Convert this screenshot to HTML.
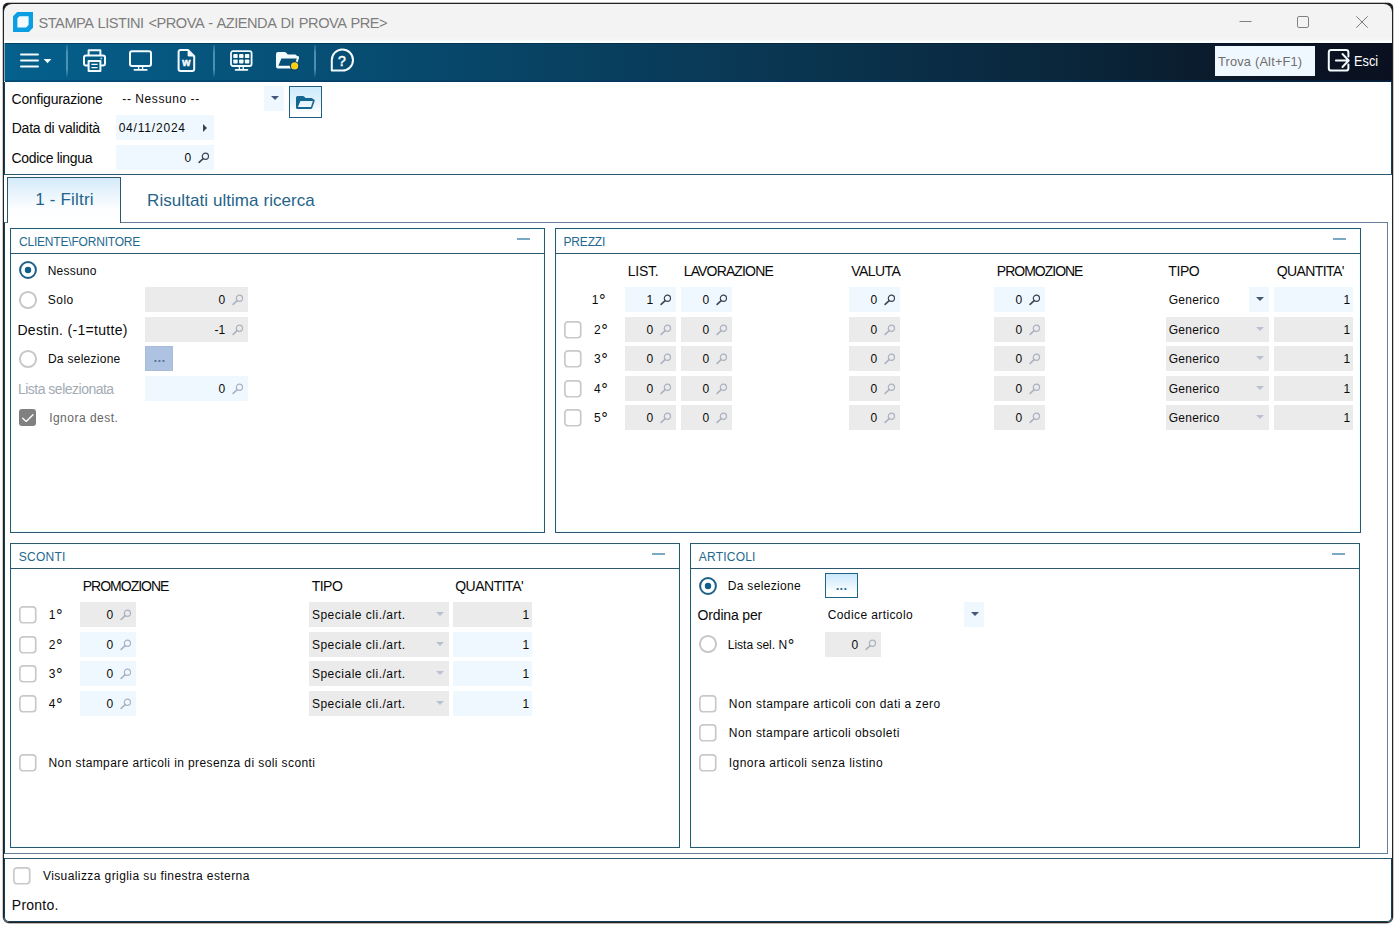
<!DOCTYPE html>
<html lang="it"><head><meta charset="utf-8"><title>STAMPA LISTINI</title>
<style>
html,body{margin:0;padding:0}
body{width:1396px;height:925px;background:#fff;position:relative;overflow:hidden;font-family:"Liberation Sans", sans-serif;}
div,svg,.t{position:absolute}
.deg{font-size:16.5px;line-height:0;position:relative;top:2.4px;margin-left:.7px}
svg{overflow:visible}
svg text{position:static}
.t{white-space:pre;line-height:20px;height:20px}
#win{left:3px;top:3px;width:1390px;height:920px;box-sizing:border-box;border:1px solid #232323;border-radius:5px 5px 6px 6px;background:#fff;box-shadow:0 0 0 .4px rgba(20,20,20,.55)}
</style></head>
<body>
<div id="win"></div>
<div style="left:3px;top:3px;width:9px;height:9px;background:#1e1e1e;border-radius:5px 0 0 0"></div>
<div style="left:1384px;top:3px;width:9px;height:9px;background:#1e1e1e;border-radius:0 5px 0 0"></div>
<div style="left:4px;top:4px;width:1388px;height:39px;background:linear-gradient(#f3f3f3 0,#f3f3f3 35px,#fbffff 37.5px,#fbffff 100%);border-radius:8px 8px 0 0"></div>
<svg style="left:13px;top:12px" width="20" height="20" viewBox="0 0 20 20"><path d="M4.2 0 H20 V15.8 L15.8 20 H0 V4.2 Z" fill="#0c9ee2"/><path d="M6.6 4.2 H15.6 V12.6 Q15.6 13 15.3 13.3 L13.3 15.3 Q13 15.6 12.6 15.6 H4.4 V6.6 Q4.4 6.2 4.7 5.9 L5.9 4.7 Q6.2 4.2 6.6 4.2 Z" fill="#f4fbff"/></svg>
<span class="t" style="top:12.94px;font-size:14.6px;color:#7d7d7d;letter-spacing:-0.471px;word-spacing:1.2px;left:38.50px;">STAMPA LISTINI &lt;PROVA - AZIENDA DI PROVA PRE&gt;</span>
<svg style="left:1230px;top:10px" width="150" height="24" viewBox="0 0 150 24"><path d="M9.5 11.5 H21.5" stroke="#808080" stroke-width="1" fill="none"/><rect x="67.5" y="6.5" width="11" height="11" rx="1.6" fill="none" stroke="#808080" stroke-width="1"/><path d="M126.3 6.3 L137.7 17.7 M137.7 6.3 L126.3 17.7" stroke="#7c7c7c" stroke-width="1" fill="none"/></svg>
<div style="left:5px;top:43px;width:1387px;height:39px;background:linear-gradient(90deg,#04608c 0%,#07496d 30%,#0a3550 57%,#0a2438 79%,#0a1424 93%,#0a1020 100%)"></div>
<div style="left:5px;top:43px;width:1387px;height:1px;background:rgba(0,0,20,.28)"></div>
<div style="left:5px;top:80px;width:1387px;height:2px;background:linear-gradient(rgba(0,48,90,.25),rgba(0,52,96,.6))"></div>
<div style="left:4px;top:43px;width:1px;height:38px;background:#7aaac4"></div>
<div style="left:66.0px;top:45px;width:1.6px;height:32px;background:linear-gradient(rgba(120,180,215,.2),rgba(120,180,215,.62) 25%,rgba(120,180,215,.62) 75%,rgba(120,180,215,.08))"></div>
<div style="left:213.39999999999998px;top:45px;width:1.6px;height:32px;background:linear-gradient(rgba(120,180,215,.2),rgba(120,180,215,.62) 25%,rgba(120,180,215,.62) 75%,rgba(120,180,215,.08))"></div>
<div style="left:314.2px;top:45px;width:1.6px;height:32px;background:linear-gradient(rgba(120,180,215,.2),rgba(120,180,215,.62) 25%,rgba(120,180,215,.62) 75%,rgba(120,180,215,.08))"></div>
<svg style="left:18px;top:50px" width="36" height="22" viewBox="0 0 36 22"><path d="M3 4.6 H20 M3 10.5 H20 M3 16.5 H20" stroke="#f3fbff" stroke-width="2" stroke-linecap="round" fill="none"/><path d="M25.6 9 H33.4 L29.5 13.2 Z" fill="#f3fbff"/></svg>
<svg style="left:82px;top:48px" width="26" height="26" viewBox="0 0 26 26"><g fill="none" stroke="#f3fbff" stroke-width="2" stroke-linejoin="round"><path d="M6.6 7 V2.2 H18.4 V7"/><path d="M6.4 17.6 H4 Q2 17.6 2 15.6 V9.4 Q2 7.4 4 7.4 H21 Q23 7.4 23 9.4 V15.6 Q23 17.6 21 17.6 H18.6"/><path d="M6.6 13 H18.4 V23 H6.6 Z"/></g><path d="M9.4 16.4 H15.6 M9.4 19.6 H15.6" stroke="#f3fbff" stroke-width="1.4" fill="none"/><circle cx="19.2" cy="10.6" r="1" fill="#8fd0f4"/></svg>
<svg style="left:128px;top:48px" width="26" height="26" viewBox="0 0 26 26"><rect x="2" y="3.2" width="21" height="14.8" rx="2" fill="none" stroke="#f3fbff" stroke-width="2"/><path d="M10.6 18.5 V21.4 M14.6 18.5 V21.4" stroke="#f3fbff" stroke-width="1.4"/><path d="M6.4 21.8 H18.8" stroke="#f3fbff" stroke-width="1.8" stroke-linecap="round"/></svg>
<svg style="left:176px;top:48px" width="22" height="26" viewBox="0 0 22 26"><path d="M4.6 2 H12 L18.2 8.2 V21 Q18.2 23 16.2 23 H4.6 Q2.6 23 2.6 21 V4 Q2.6 2 4.6 2 Z" fill="none" stroke="#f3fbff" stroke-width="2" stroke-linejoin="round"/><path d="M11.6 1.4 L18.8 8.6 H13 Q11.6 8.6 11.6 7.2 Z" fill="#f3fbff"/><text x="10.4" y="18.2" font-family="Liberation Sans, sans-serif" font-size="10.5" font-weight="700" fill="#f3fbff" stroke="#f3fbff" stroke-width="0.5" text-anchor="middle">w</text></svg>
<svg style="left:228px;top:48px" width="28" height="26" viewBox="0 0 28 26"><rect x="3" y="3.2" width="20.6" height="14.8" rx="2" fill="none" stroke="#f3fbff" stroke-width="1.8"/><rect x="5.3" y="6.1" width="4.4" height="4" rx="0.9" fill="#f3fbff"/><rect x="5.3" y="11.4" width="4.4" height="4" rx="0.9" fill="#f3fbff"/><rect x="11.1" y="6.1" width="4.4" height="4" rx="0.9" fill="#f3fbff"/><rect x="11.1" y="11.4" width="4.4" height="4" rx="0.9" fill="#f3fbff"/><rect x="16.9" y="6.1" width="4.4" height="4" rx="0.9" fill="#f3fbff"/><rect x="16.9" y="11.4" width="4.4" height="4" rx="0.9" fill="#f3fbff"/><path d="M11.4 18.5 V21.4 M15.2 18.5 V21.4" stroke="#f3fbff" stroke-width="1.4"/><path d="M7.6 21.8 H19.4" stroke="#f3fbff" stroke-width="1.8" stroke-linecap="round"/></svg>
<svg style="left:276px;top:52px" width="24" height="18" viewBox="0 0 24 18"><path d="M0,2 Q0,0 2,0 H8.5 Q9.5,0 10.2,0.8 L11.8,2.4 H19 Q20.6,2.4 20.9,4 H21.6 Q23.6,4 23,5.9 L20,15 Q19.6,16.4 18.2,16.4 H2 Q0,16.4 0,14.4 Z M5.4,6.4 H20.8 L18.4,13.8 H2.4 Z" fill="#f3fbff" fill-rule="evenodd"/><circle cx="18.6" cy="13.95" r="4.7" fill="#063c5c"/><circle cx="18.6" cy="13.95" r="3.6" fill="#f3d33a"/><circle cx="18.6" cy="13.95" r="2.5" fill="#ffcb05"/></svg>
<svg style="left:329px;top:47px" width="28" height="27" viewBox="0 0 28 27"><path d="M2.8 23.6 V13.2 A10.6 10.6 0 1 1 13.4 23.6 Z" fill="none" stroke="#f3fbff" stroke-width="2" stroke-linejoin="round"/><text x="12.9" y="18.8" font-family="Liberation Sans, sans-serif" font-size="14" font-weight="400" fill="#f3fbff" stroke="#f3fbff" stroke-width="0.55" text-anchor="middle">?</text></svg>
<div style="left:1215px;top:46px;width:100px;height:30px;background:#f0f8ff"></div>
<span class="t" style="top:51.66px;font-size:12.8px;color:#6e6e6e;letter-spacing:0.189px;left:1218.00px;">Trova (Alt+F1)</span>
<svg style="left:1326px;top:47px" width="26" height="27" viewBox="0 0 26 27"><path d="M22.4 9.6 V5.4 Q22.4 3 20 3 H5.2 Q2.8 3 2.8 5.4 V21.2 Q2.8 23.6 5.2 23.6 H20 Q22.4 23.6 22.4 21.2 V17.4" fill="none" stroke="#f3fbff" stroke-width="2" stroke-linecap="round"/><path d="M9.9 13.5 H22 M16.5 7 L22.7 13.5 L16.5 20" fill="none" stroke="#f3fbff" stroke-width="2" stroke-linecap="round" stroke-linejoin="round"/></svg>
<span class="t" style="top:50.70px;font-size:15px;color:#fff;left:1354.47px;transform:scaleX(.85);transform-origin:0 50%;">Esci</span>
<div style="left:4px;top:82px;width:1px;height:93px;background:#163e54"></div>
<div style="left:1391px;top:82px;width:1px;height:93px;background:#163e54"></div>
<div style="left:4px;top:174px;width:1388px;height:1px;background:#2c586f"></div>
<span class="t" style="top:88.85px;font-size:14px;color:#0a0a0a;letter-spacing:-0.226px;left:11.53px;">Configurazione</span>
<span class="t" style="top:117.85px;font-size:14px;color:#0a0a0a;letter-spacing:-0.226px;left:11.73px;">Data di validità</span>
<span class="t" style="top:147.85px;font-size:14px;color:#0a0a0a;letter-spacing:-0.325px;left:11.53px;">Codice lingua</span>
<div style="left:264px;top:86px;width:20px;height:25px;background:#f0f8ff"></div>
<svg style="left:271px;top:96.2px" width="8" height="4" viewBox="0 0 8 4"><path d="M0 0 H8 L4 4 Z" fill="#46587a"/></svg>
<span class="t" style="top:88.84px;font-size:12px;color:#0a0a0a;letter-spacing:0.567px;left:122.34px;">-- Nessuno --</span>
<div style="left:289px;top:86px;width:33px;height:32px;box-sizing:border-box;border:1.2px solid #1f5f80;background:linear-gradient(#cceafb 0,#e4f3fd 50%,#fff 88%)"></div>
<svg style="left:296.1px;top:96px" width="19" height="13" viewBox="0 0 23.4 16.4" preserveAspectRatio="none"><path d="M0,2 Q0,0 2,0 H8.5 Q9.5,0 10.2,0.8 L11.8,2.4 H19 Q20.6,2.4 20.9,4 H21.6 Q23.6,4 23,5.9 L20,15 Q19.6,16.4 18.2,16.4 H2 Q0,16.4 0,14.4 Z M5.4,6.4 H20.8 L18.4,13.8 H2.4 Z" fill="#136790" fill-rule="evenodd"/></svg>
<div style="left:116px;top:115px;width:98px;height:25px;background:#f0f8ff"></div>
<span class="t" style="top:117.84px;font-size:12px;color:#0a0a0a;letter-spacing:0.805px;left:118.64px;">04/11/2024</span>
<svg style="left:203px;top:123.5px" width="4" height="8" viewBox="0 0 4 8"><path d="M0 0 L4 4 L0 8 Z" fill="#3b4256"/></svg>
<div style="left:116px;top:145px;width:98px;height:25px;background:#f0f8ff"></div>
<svg style="left:198.3px;top:152.25px" width="12" height="12" viewBox="0 0 12 12"><circle cx="7.4" cy="4.3" r="3.1" fill="none" stroke="#3b4256" stroke-width="1.2"/><path d="M5.2 6.6 L1.1 10.4" stroke="#3b4256" stroke-width="1.55" stroke-linecap="round"/></svg>
<span class="t" style="top:147.84px;font-size:12px;color:#0a0a0a;right:1204.94px;">0</span>
<div style="left:4px;top:222px;width:1384px;height:632px;box-sizing:border-box;border:1px solid #687f9b;border-left-color:#163e54"></div>
<div style="left:7px;top:177px;width:114px;height:46px;box-sizing:border-box;border:1px solid #2c586f;border-bottom:none;background:linear-gradient(#d4eafa 0,#e9f4fc 35%,#fcfeff 68%,#fff 100%)"></div>
<span class="t" style="top:189.91px;font-size:17px;color:#24648a;letter-spacing:0.200px;left:35.16px;">1 - Filtri</span>
<span class="t" style="top:190.81px;font-size:17px;color:#24648a;letter-spacing:0.065px;left:147.06px;">Risultati ultima ricerca</span>
<div style="left:10px;top:228px;width:535px;height:305px;box-sizing:border-box;border:1px solid #2c586f;background:#fff;box-shadow:inset 0 0 0 1px #edffff"></div>
<div style="left:10px;top:253px;width:535px;height:1px;background:#2c586f"></div>
<span class="t" style="top:231.84px;font-size:12px;color:#23698f;letter-spacing:-0.191px;left:18.94px;">CLIENTE\FORNITORE</span>
<div style="left:517px;top:238px;width:13px;height:2px;background:#7ba8c2"></div>
<svg style="left:18px;top:260.3px" width="20" height="20" viewBox="0 0 20 20"><circle cx="10" cy="10" r="7.9" fill="#fff" stroke="#1b6088" stroke-width="2"/><circle cx="10" cy="10" r="3.2" fill="#0f5f8c"/></svg>
<span class="t" style="top:260.64px;font-size:12px;color:#0a0a0a;letter-spacing:0.208px;left:47.74px;">Nessuno</span>
<svg style="left:18px;top:289.5px" width="20" height="20" viewBox="0 0 20 20"><circle cx="10" cy="10" r="8.1" fill="#fff" stroke="#c8c8c8" stroke-width="2"/></svg>
<span class="t" style="top:289.84px;font-size:12px;color:#0a0a0a;letter-spacing:0.496px;left:47.74px;">Solo</span>
<div style="left:145px;top:287px;width:103px;height:25px;background:#ebebeb"></div>
<svg style="left:232.3px;top:294.25px" width="12" height="12" viewBox="0 0 12 12"><circle cx="7.4" cy="4.3" r="3.1" fill="none" stroke="#aab1c0" stroke-width="1.2"/><path d="M5.2 6.6 L1.1 10.4" stroke="#aab1c0" stroke-width="1.55" stroke-linecap="round"/></svg>
<span class="t" style="top:289.84px;font-size:12px;color:#0a0a0a;right:1170.94px;">0</span>
<span class="t" style="top:319.55px;font-size:14px;color:#0a0a0a;letter-spacing:0.317px;left:17.43px;">Destin. (-1=tutte)</span>
<div style="left:145px;top:317px;width:103px;height:25px;background:#ebebeb"></div>
<svg style="left:232.3px;top:324.25px" width="12" height="12" viewBox="0 0 12 12"><circle cx="7.4" cy="4.3" r="3.1" fill="none" stroke="#aab1c0" stroke-width="1.2"/><path d="M5.2 6.6 L1.1 10.4" stroke="#aab1c0" stroke-width="1.55" stroke-linecap="round"/></svg>
<span class="t" style="top:319.84px;font-size:12px;color:#0a0a0a;right:1170.94px;">-1</span>
<svg style="left:18px;top:348.5px" width="20" height="20" viewBox="0 0 20 20"><circle cx="10" cy="10" r="8.1" fill="#fff" stroke="#c8c8c8" stroke-width="2"/></svg>
<span class="t" style="top:348.84px;font-size:12px;color:#0a0a0a;letter-spacing:0.268px;left:47.94px;">Da selezione</span>
<div style="left:145px;top:346px;width:28px;height:25px;box-sizing:border-box;border:1px solid #a9bddb;background:#adc3e1"></div>
<span class="t" style="top:346.42px;font-size:19px;color:#5b7196;left:152.86px;letter-spacing:-1.28px;">...</span>
<span class="t" style="top:378.85px;font-size:14px;color:#a3abb5;letter-spacing:-0.504px;left:17.93px;">Lista selezionata</span>
<div style="left:145px;top:376px;width:103px;height:25px;background:#f0f8ff"></div>
<svg style="left:232.3px;top:383.25px" width="12" height="12" viewBox="0 0 12 12"><circle cx="7.4" cy="4.3" r="3.1" fill="none" stroke="#aab1c0" stroke-width="1.2"/><path d="M5.2 6.6 L1.1 10.4" stroke="#aab1c0" stroke-width="1.55" stroke-linecap="round"/></svg>
<span class="t" style="top:378.84px;font-size:12px;color:#0a0a0a;right:1170.94px;">0</span>
<div style="left:18.8px;top:408.6px;width:17.5px;height:17.5px;border-radius:3px;background:#808080"><svg width="17.5" height="17.5" viewBox="0 0 17.5 17.5" style="left:0;top:0"><path d="M3.7 9.3 L7.2 12.4 L14 5.8" fill="none" stroke="#fff" stroke-width="1.35" stroke-linecap="round" stroke-linejoin="round"/></svg></div>
<span class="t" style="top:407.84px;font-size:12px;color:#666;letter-spacing:0.486px;left:49.14px;">Ignora dest.</span>
<div style="left:555px;top:228px;width:806px;height:305px;box-sizing:border-box;border:1px solid #2c586f;background:#fff;box-shadow:inset 0 0 0 1px #edffff"></div>
<div style="left:555px;top:253px;width:806px;height:1px;background:#2c586f"></div>
<span class="t" style="top:231.84px;font-size:12px;color:#23698f;letter-spacing:-0.170px;left:563.54px;">PREZZI</span>
<div style="left:1333px;top:238px;width:13px;height:2px;background:#7ba8c2"></div>
<span class="t" style="top:261.15px;font-size:14px;color:#0a0a0a;letter-spacing:-0.242px;left:627.83px;">LIST.</span>
<span class="t" style="top:261.15px;font-size:14px;color:#0a0a0a;letter-spacing:-0.851px;left:683.73px;">LAVORAZIONE</span>
<span class="t" style="top:261.15px;font-size:14px;color:#0a0a0a;letter-spacing:-0.570px;left:851.23px;">VALUTA</span>
<span class="t" style="top:261.15px;font-size:14px;color:#0a0a0a;letter-spacing:-1.004px;left:996.83px;">PROMOZIONE</span>
<span class="t" style="top:261.15px;font-size:14px;color:#0a0a0a;letter-spacing:-0.377px;left:1168.23px;">TIPO</span>
<span class="t" style="top:261.15px;font-size:14px;color:#0a0a0a;letter-spacing:-0.585px;left:1276.63px;">QUANTITA&#x27;</span>
<span class="t" style="top:290.04px;font-size:12px;color:#0a0a0a;left:591.74px;">1<span class="deg">°</span></span>
<div style="left:625px;top:287px;width:51px;height:25px;background:#f0f8ff"></div>
<svg style="left:660.3px;top:294.25px" width="12" height="12" viewBox="0 0 12 12"><circle cx="7.4" cy="4.3" r="3.1" fill="none" stroke="#3b4256" stroke-width="1.2"/><path d="M5.2 6.6 L1.1 10.4" stroke="#3b4256" stroke-width="1.55" stroke-linecap="round"/></svg>
<span class="t" style="top:289.84px;font-size:12px;color:#0a0a0a;right:742.94px;">1</span>
<div style="left:681px;top:287px;width:51px;height:25px;background:#f0f8ff"></div>
<svg style="left:716.3px;top:294.25px" width="12" height="12" viewBox="0 0 12 12"><circle cx="7.4" cy="4.3" r="3.1" fill="none" stroke="#3b4256" stroke-width="1.2"/><path d="M5.2 6.6 L1.1 10.4" stroke="#3b4256" stroke-width="1.55" stroke-linecap="round"/></svg>
<span class="t" style="top:289.84px;font-size:12px;color:#0a0a0a;right:686.94px;">0</span>
<div style="left:849px;top:287px;width:51px;height:25px;background:#f0f8ff"></div>
<svg style="left:884.3px;top:294.25px" width="12" height="12" viewBox="0 0 12 12"><circle cx="7.4" cy="4.3" r="3.1" fill="none" stroke="#3b4256" stroke-width="1.2"/><path d="M5.2 6.6 L1.1 10.4" stroke="#3b4256" stroke-width="1.55" stroke-linecap="round"/></svg>
<span class="t" style="top:289.84px;font-size:12px;color:#0a0a0a;right:518.94px;">0</span>
<div style="left:994px;top:287px;width:51px;height:25px;background:#f0f8ff"></div>
<svg style="left:1029.3px;top:294.25px" width="12" height="12" viewBox="0 0 12 12"><circle cx="7.4" cy="4.3" r="3.1" fill="none" stroke="#3b4256" stroke-width="1.2"/><path d="M5.2 6.6 L1.1 10.4" stroke="#3b4256" stroke-width="1.55" stroke-linecap="round"/></svg>
<span class="t" style="top:289.84px;font-size:12px;color:#0a0a0a;right:373.94px;">0</span>
<div style="left:1249px;top:287px;width:20px;height:25px;background:#f0f8ff"></div>
<svg style="left:1255.7px;top:297.3px" width="8" height="4" viewBox="0 0 8 4"><path d="M0 0 H8 L4 4 Z" fill="#46587a"/></svg>
<span class="t" style="top:289.84px;font-size:12px;color:#0a0a0a;letter-spacing:0.288px;left:1168.64px;">Generico</span>
<div style="left:1274px;top:287px;width:79px;height:25px;background:#f0f8ff"></div>
<span class="t" style="top:289.84px;font-size:12px;color:#0a0a0a;right:45.94px;">1</span>
<svg style="left:564px;top:320.6px" width="17.6" height="17.6" viewBox="0 0 17.6 17.6"><rect x="0.85" y="0.85" width="15.9" height="15.9" rx="3.2" fill="#fff" stroke="#c9c9c9" stroke-width="1.7"/></svg>
<span class="t" style="top:320.04px;font-size:12px;color:#0a0a0a;left:593.94px;">2<span class="deg">°</span></span>
<div style="left:625px;top:317px;width:51px;height:25px;background:#ebebeb"></div>
<svg style="left:660.3px;top:324.25px" width="12" height="12" viewBox="0 0 12 12"><circle cx="7.4" cy="4.3" r="3.1" fill="none" stroke="#aab1c0" stroke-width="1.2"/><path d="M5.2 6.6 L1.1 10.4" stroke="#aab1c0" stroke-width="1.55" stroke-linecap="round"/></svg>
<span class="t" style="top:319.84px;font-size:12px;color:#0a0a0a;right:742.94px;">0</span>
<div style="left:681px;top:317px;width:51px;height:25px;background:#ebebeb"></div>
<svg style="left:716.3px;top:324.25px" width="12" height="12" viewBox="0 0 12 12"><circle cx="7.4" cy="4.3" r="3.1" fill="none" stroke="#aab1c0" stroke-width="1.2"/><path d="M5.2 6.6 L1.1 10.4" stroke="#aab1c0" stroke-width="1.55" stroke-linecap="round"/></svg>
<span class="t" style="top:319.84px;font-size:12px;color:#0a0a0a;right:686.94px;">0</span>
<div style="left:849px;top:317px;width:51px;height:25px;background:#ebebeb"></div>
<svg style="left:884.3px;top:324.25px" width="12" height="12" viewBox="0 0 12 12"><circle cx="7.4" cy="4.3" r="3.1" fill="none" stroke="#aab1c0" stroke-width="1.2"/><path d="M5.2 6.6 L1.1 10.4" stroke="#aab1c0" stroke-width="1.55" stroke-linecap="round"/></svg>
<span class="t" style="top:319.84px;font-size:12px;color:#0a0a0a;right:518.94px;">0</span>
<div style="left:994px;top:317px;width:51px;height:25px;background:#ebebeb"></div>
<svg style="left:1029.3px;top:324.25px" width="12" height="12" viewBox="0 0 12 12"><circle cx="7.4" cy="4.3" r="3.1" fill="none" stroke="#aab1c0" stroke-width="1.2"/><path d="M5.2 6.6 L1.1 10.4" stroke="#aab1c0" stroke-width="1.55" stroke-linecap="round"/></svg>
<span class="t" style="top:319.84px;font-size:12px;color:#0a0a0a;right:373.94px;">0</span>
<div style="left:1166px;top:317px;width:103px;height:25px;background:#ebebeb"></div>
<svg style="left:1255.7px;top:327.3px" width="8" height="4" viewBox="0 0 8 4"><path d="M0 0 H8 L4 4 Z" fill="#b9c1d0"/></svg>
<span class="t" style="top:319.84px;font-size:12px;color:#0a0a0a;letter-spacing:0.288px;left:1168.64px;">Generico</span>
<div style="left:1274px;top:317px;width:79px;height:25px;background:#ebebeb"></div>
<span class="t" style="top:319.84px;font-size:12px;color:#0a0a0a;right:45.94px;">1</span>
<svg style="left:564px;top:349.6px" width="17.6" height="17.6" viewBox="0 0 17.6 17.6"><rect x="0.85" y="0.85" width="15.9" height="15.9" rx="3.2" fill="#fff" stroke="#c9c9c9" stroke-width="1.7"/></svg>
<span class="t" style="top:349.04px;font-size:12px;color:#0a0a0a;left:593.94px;">3<span class="deg">°</span></span>
<div style="left:625px;top:346px;width:51px;height:25px;background:#ebebeb"></div>
<svg style="left:660.3px;top:353.25px" width="12" height="12" viewBox="0 0 12 12"><circle cx="7.4" cy="4.3" r="3.1" fill="none" stroke="#aab1c0" stroke-width="1.2"/><path d="M5.2 6.6 L1.1 10.4" stroke="#aab1c0" stroke-width="1.55" stroke-linecap="round"/></svg>
<span class="t" style="top:348.84px;font-size:12px;color:#0a0a0a;right:742.94px;">0</span>
<div style="left:681px;top:346px;width:51px;height:25px;background:#ebebeb"></div>
<svg style="left:716.3px;top:353.25px" width="12" height="12" viewBox="0 0 12 12"><circle cx="7.4" cy="4.3" r="3.1" fill="none" stroke="#aab1c0" stroke-width="1.2"/><path d="M5.2 6.6 L1.1 10.4" stroke="#aab1c0" stroke-width="1.55" stroke-linecap="round"/></svg>
<span class="t" style="top:348.84px;font-size:12px;color:#0a0a0a;right:686.94px;">0</span>
<div style="left:849px;top:346px;width:51px;height:25px;background:#ebebeb"></div>
<svg style="left:884.3px;top:353.25px" width="12" height="12" viewBox="0 0 12 12"><circle cx="7.4" cy="4.3" r="3.1" fill="none" stroke="#aab1c0" stroke-width="1.2"/><path d="M5.2 6.6 L1.1 10.4" stroke="#aab1c0" stroke-width="1.55" stroke-linecap="round"/></svg>
<span class="t" style="top:348.84px;font-size:12px;color:#0a0a0a;right:518.94px;">0</span>
<div style="left:994px;top:346px;width:51px;height:25px;background:#ebebeb"></div>
<svg style="left:1029.3px;top:353.25px" width="12" height="12" viewBox="0 0 12 12"><circle cx="7.4" cy="4.3" r="3.1" fill="none" stroke="#aab1c0" stroke-width="1.2"/><path d="M5.2 6.6 L1.1 10.4" stroke="#aab1c0" stroke-width="1.55" stroke-linecap="round"/></svg>
<span class="t" style="top:348.84px;font-size:12px;color:#0a0a0a;right:373.94px;">0</span>
<div style="left:1166px;top:346px;width:103px;height:25px;background:#ebebeb"></div>
<svg style="left:1255.7px;top:356.3px" width="8" height="4" viewBox="0 0 8 4"><path d="M0 0 H8 L4 4 Z" fill="#b9c1d0"/></svg>
<span class="t" style="top:348.84px;font-size:12px;color:#0a0a0a;letter-spacing:0.288px;left:1168.64px;">Generico</span>
<div style="left:1274px;top:346px;width:79px;height:25px;background:#ebebeb"></div>
<span class="t" style="top:348.84px;font-size:12px;color:#0a0a0a;right:45.94px;">1</span>
<svg style="left:564px;top:379.6px" width="17.6" height="17.6" viewBox="0 0 17.6 17.6"><rect x="0.85" y="0.85" width="15.9" height="15.9" rx="3.2" fill="#fff" stroke="#c9c9c9" stroke-width="1.7"/></svg>
<span class="t" style="top:379.04px;font-size:12px;color:#0a0a0a;left:593.94px;">4<span class="deg">°</span></span>
<div style="left:625px;top:376px;width:51px;height:25px;background:#ebebeb"></div>
<svg style="left:660.3px;top:383.25px" width="12" height="12" viewBox="0 0 12 12"><circle cx="7.4" cy="4.3" r="3.1" fill="none" stroke="#aab1c0" stroke-width="1.2"/><path d="M5.2 6.6 L1.1 10.4" stroke="#aab1c0" stroke-width="1.55" stroke-linecap="round"/></svg>
<span class="t" style="top:378.84px;font-size:12px;color:#0a0a0a;right:742.94px;">0</span>
<div style="left:681px;top:376px;width:51px;height:25px;background:#ebebeb"></div>
<svg style="left:716.3px;top:383.25px" width="12" height="12" viewBox="0 0 12 12"><circle cx="7.4" cy="4.3" r="3.1" fill="none" stroke="#aab1c0" stroke-width="1.2"/><path d="M5.2 6.6 L1.1 10.4" stroke="#aab1c0" stroke-width="1.55" stroke-linecap="round"/></svg>
<span class="t" style="top:378.84px;font-size:12px;color:#0a0a0a;right:686.94px;">0</span>
<div style="left:849px;top:376px;width:51px;height:25px;background:#ebebeb"></div>
<svg style="left:884.3px;top:383.25px" width="12" height="12" viewBox="0 0 12 12"><circle cx="7.4" cy="4.3" r="3.1" fill="none" stroke="#aab1c0" stroke-width="1.2"/><path d="M5.2 6.6 L1.1 10.4" stroke="#aab1c0" stroke-width="1.55" stroke-linecap="round"/></svg>
<span class="t" style="top:378.84px;font-size:12px;color:#0a0a0a;right:518.94px;">0</span>
<div style="left:994px;top:376px;width:51px;height:25px;background:#ebebeb"></div>
<svg style="left:1029.3px;top:383.25px" width="12" height="12" viewBox="0 0 12 12"><circle cx="7.4" cy="4.3" r="3.1" fill="none" stroke="#aab1c0" stroke-width="1.2"/><path d="M5.2 6.6 L1.1 10.4" stroke="#aab1c0" stroke-width="1.55" stroke-linecap="round"/></svg>
<span class="t" style="top:378.84px;font-size:12px;color:#0a0a0a;right:373.94px;">0</span>
<div style="left:1166px;top:376px;width:103px;height:25px;background:#ebebeb"></div>
<svg style="left:1255.7px;top:386.3px" width="8" height="4" viewBox="0 0 8 4"><path d="M0 0 H8 L4 4 Z" fill="#b9c1d0"/></svg>
<span class="t" style="top:378.84px;font-size:12px;color:#0a0a0a;letter-spacing:0.288px;left:1168.64px;">Generico</span>
<div style="left:1274px;top:376px;width:79px;height:25px;background:#ebebeb"></div>
<span class="t" style="top:378.84px;font-size:12px;color:#0a0a0a;right:45.94px;">1</span>
<svg style="left:564px;top:408.6px" width="17.6" height="17.6" viewBox="0 0 17.6 17.6"><rect x="0.85" y="0.85" width="15.9" height="15.9" rx="3.2" fill="#fff" stroke="#c9c9c9" stroke-width="1.7"/></svg>
<span class="t" style="top:408.04px;font-size:12px;color:#0a0a0a;left:593.94px;">5<span class="deg">°</span></span>
<div style="left:625px;top:405px;width:51px;height:25px;background:#ebebeb"></div>
<svg style="left:660.3px;top:412.25px" width="12" height="12" viewBox="0 0 12 12"><circle cx="7.4" cy="4.3" r="3.1" fill="none" stroke="#aab1c0" stroke-width="1.2"/><path d="M5.2 6.6 L1.1 10.4" stroke="#aab1c0" stroke-width="1.55" stroke-linecap="round"/></svg>
<span class="t" style="top:407.84px;font-size:12px;color:#0a0a0a;right:742.94px;">0</span>
<div style="left:681px;top:405px;width:51px;height:25px;background:#ebebeb"></div>
<svg style="left:716.3px;top:412.25px" width="12" height="12" viewBox="0 0 12 12"><circle cx="7.4" cy="4.3" r="3.1" fill="none" stroke="#aab1c0" stroke-width="1.2"/><path d="M5.2 6.6 L1.1 10.4" stroke="#aab1c0" stroke-width="1.55" stroke-linecap="round"/></svg>
<span class="t" style="top:407.84px;font-size:12px;color:#0a0a0a;right:686.94px;">0</span>
<div style="left:849px;top:405px;width:51px;height:25px;background:#ebebeb"></div>
<svg style="left:884.3px;top:412.25px" width="12" height="12" viewBox="0 0 12 12"><circle cx="7.4" cy="4.3" r="3.1" fill="none" stroke="#aab1c0" stroke-width="1.2"/><path d="M5.2 6.6 L1.1 10.4" stroke="#aab1c0" stroke-width="1.55" stroke-linecap="round"/></svg>
<span class="t" style="top:407.84px;font-size:12px;color:#0a0a0a;right:518.94px;">0</span>
<div style="left:994px;top:405px;width:51px;height:25px;background:#ebebeb"></div>
<svg style="left:1029.3px;top:412.25px" width="12" height="12" viewBox="0 0 12 12"><circle cx="7.4" cy="4.3" r="3.1" fill="none" stroke="#aab1c0" stroke-width="1.2"/><path d="M5.2 6.6 L1.1 10.4" stroke="#aab1c0" stroke-width="1.55" stroke-linecap="round"/></svg>
<span class="t" style="top:407.84px;font-size:12px;color:#0a0a0a;right:373.94px;">0</span>
<div style="left:1166px;top:405px;width:103px;height:25px;background:#ebebeb"></div>
<svg style="left:1255.7px;top:415.3px" width="8" height="4" viewBox="0 0 8 4"><path d="M0 0 H8 L4 4 Z" fill="#b9c1d0"/></svg>
<span class="t" style="top:407.84px;font-size:12px;color:#0a0a0a;letter-spacing:0.288px;left:1168.64px;">Generico</span>
<div style="left:1274px;top:405px;width:79px;height:25px;background:#ebebeb"></div>
<span class="t" style="top:407.84px;font-size:12px;color:#0a0a0a;right:45.94px;">1</span>
<div style="left:10px;top:543px;width:670px;height:305px;box-sizing:border-box;border:1px solid #2c586f;background:#fff;box-shadow:inset 0 0 0 1px #edffff"></div>
<div style="left:10px;top:568px;width:670px;height:1px;background:#2c586f"></div>
<span class="t" style="top:546.84px;font-size:12px;color:#23698f;letter-spacing:0.255px;left:18.74px;">SCONTI</span>
<div style="left:652px;top:553px;width:13px;height:2px;background:#7ba8c2"></div>
<span class="t" style="top:576.15px;font-size:14px;color:#0a0a0a;letter-spacing:-0.992px;left:82.73px;">PROMOZIONE</span>
<span class="t" style="top:576.15px;font-size:14px;color:#0a0a0a;letter-spacing:-0.577px;left:311.83px;">TIPO</span>
<span class="t" style="top:576.15px;font-size:14px;color:#0a0a0a;letter-spacing:-0.498px;left:455.23px;">QUANTITA&#x27;</span>
<svg style="left:18.8px;top:605.6px" width="17.6" height="17.6" viewBox="0 0 17.6 17.6"><rect x="0.85" y="0.85" width="15.9" height="15.9" rx="3.2" fill="#fff" stroke="#c9c9c9" stroke-width="1.7"/></svg>
<span class="t" style="top:605.04px;font-size:12px;color:#0a0a0a;left:48.74px;">1<span class="deg">°</span></span>
<div style="left:80px;top:602px;width:56px;height:25px;background:#ebebeb"></div>
<svg style="left:120.3px;top:609.25px" width="12" height="12" viewBox="0 0 12 12"><circle cx="7.4" cy="4.3" r="3.1" fill="none" stroke="#aab1c0" stroke-width="1.2"/><path d="M5.2 6.6 L1.1 10.4" stroke="#aab1c0" stroke-width="1.55" stroke-linecap="round"/></svg>
<span class="t" style="top:604.84px;font-size:12px;color:#0a0a0a;right:1282.94px;">0</span>
<div style="left:309px;top:602px;width:140px;height:25px;background:#ebebeb"></div>
<svg style="left:435.7px;top:612.3px" width="8" height="4" viewBox="0 0 8 4"><path d="M0 0 H8 L4 4 Z" fill="#b9c1d0"/></svg>
<span class="t" style="top:604.84px;font-size:12px;color:#0a0a0a;letter-spacing:0.501px;left:311.94px;">Speciale cli./art.</span>
<div style="left:453px;top:602px;width:79px;height:25px;background:#ebebeb"></div>
<span class="t" style="top:604.84px;font-size:12px;color:#0a0a0a;right:866.94px;">1</span>
<svg style="left:18.8px;top:635.6px" width="17.6" height="17.6" viewBox="0 0 17.6 17.6"><rect x="0.85" y="0.85" width="15.9" height="15.9" rx="3.2" fill="#fff" stroke="#c9c9c9" stroke-width="1.7"/></svg>
<span class="t" style="top:635.04px;font-size:12px;color:#0a0a0a;left:48.74px;">2<span class="deg">°</span></span>
<div style="left:80px;top:632px;width:56px;height:25px;background:#f0f8ff"></div>
<svg style="left:120.3px;top:639.25px" width="12" height="12" viewBox="0 0 12 12"><circle cx="7.4" cy="4.3" r="3.1" fill="none" stroke="#aab1c0" stroke-width="1.2"/><path d="M5.2 6.6 L1.1 10.4" stroke="#aab1c0" stroke-width="1.55" stroke-linecap="round"/></svg>
<span class="t" style="top:634.84px;font-size:12px;color:#0a0a0a;right:1282.94px;">0</span>
<div style="left:309px;top:632px;width:140px;height:25px;background:#ebebeb"></div>
<svg style="left:435.7px;top:642.3px" width="8" height="4" viewBox="0 0 8 4"><path d="M0 0 H8 L4 4 Z" fill="#b9c1d0"/></svg>
<span class="t" style="top:634.84px;font-size:12px;color:#0a0a0a;letter-spacing:0.501px;left:311.94px;">Speciale cli./art.</span>
<div style="left:453px;top:632px;width:79px;height:25px;background:#f0f8ff"></div>
<span class="t" style="top:634.84px;font-size:12px;color:#0a0a0a;right:866.94px;">1</span>
<svg style="left:18.8px;top:664.6px" width="17.6" height="17.6" viewBox="0 0 17.6 17.6"><rect x="0.85" y="0.85" width="15.9" height="15.9" rx="3.2" fill="#fff" stroke="#c9c9c9" stroke-width="1.7"/></svg>
<span class="t" style="top:664.04px;font-size:12px;color:#0a0a0a;left:48.74px;">3<span class="deg">°</span></span>
<div style="left:80px;top:661px;width:56px;height:25px;background:#f0f8ff"></div>
<svg style="left:120.3px;top:668.25px" width="12" height="12" viewBox="0 0 12 12"><circle cx="7.4" cy="4.3" r="3.1" fill="none" stroke="#aab1c0" stroke-width="1.2"/><path d="M5.2 6.6 L1.1 10.4" stroke="#aab1c0" stroke-width="1.55" stroke-linecap="round"/></svg>
<span class="t" style="top:663.84px;font-size:12px;color:#0a0a0a;right:1282.94px;">0</span>
<div style="left:309px;top:661px;width:140px;height:25px;background:#ebebeb"></div>
<svg style="left:435.7px;top:671.3px" width="8" height="4" viewBox="0 0 8 4"><path d="M0 0 H8 L4 4 Z" fill="#b9c1d0"/></svg>
<span class="t" style="top:663.84px;font-size:12px;color:#0a0a0a;letter-spacing:0.501px;left:311.94px;">Speciale cli./art.</span>
<div style="left:453px;top:661px;width:79px;height:25px;background:#f0f8ff"></div>
<span class="t" style="top:663.84px;font-size:12px;color:#0a0a0a;right:866.94px;">1</span>
<svg style="left:18.8px;top:694.6px" width="17.6" height="17.6" viewBox="0 0 17.6 17.6"><rect x="0.85" y="0.85" width="15.9" height="15.9" rx="3.2" fill="#fff" stroke="#c9c9c9" stroke-width="1.7"/></svg>
<span class="t" style="top:694.04px;font-size:12px;color:#0a0a0a;left:48.74px;">4<span class="deg">°</span></span>
<div style="left:80px;top:691px;width:56px;height:25px;background:#f0f8ff"></div>
<svg style="left:120.3px;top:698.25px" width="12" height="12" viewBox="0 0 12 12"><circle cx="7.4" cy="4.3" r="3.1" fill="none" stroke="#aab1c0" stroke-width="1.2"/><path d="M5.2 6.6 L1.1 10.4" stroke="#aab1c0" stroke-width="1.55" stroke-linecap="round"/></svg>
<span class="t" style="top:693.84px;font-size:12px;color:#0a0a0a;right:1282.94px;">0</span>
<div style="left:309px;top:691px;width:140px;height:25px;background:#ebebeb"></div>
<svg style="left:435.7px;top:701.3px" width="8" height="4" viewBox="0 0 8 4"><path d="M0 0 H8 L4 4 Z" fill="#b9c1d0"/></svg>
<span class="t" style="top:693.84px;font-size:12px;color:#0a0a0a;letter-spacing:0.501px;left:311.94px;">Speciale cli./art.</span>
<div style="left:453px;top:691px;width:79px;height:25px;background:#f0f8ff"></div>
<span class="t" style="top:693.84px;font-size:12px;color:#0a0a0a;right:866.94px;">1</span>
<svg style="left:18.8px;top:753.6px" width="17.6" height="17.6" viewBox="0 0 17.6 17.6"><rect x="0.85" y="0.85" width="15.9" height="15.9" rx="3.2" fill="#fff" stroke="#c9c9c9" stroke-width="1.7"/></svg>
<span class="t" style="top:752.64px;font-size:12px;color:#0a0a0a;letter-spacing:0.404px;left:48.54px;">Non stampare articoli in presenza di soli sconti</span>
<div style="left:690px;top:543px;width:670px;height:305px;box-sizing:border-box;border:1px solid #2c586f;background:#fff;box-shadow:inset 0 0 0 1px #edffff"></div>
<div style="left:690px;top:568px;width:670px;height:1px;background:#2c586f"></div>
<span class="t" style="top:546.84px;font-size:12px;color:#23698f;letter-spacing:0.228px;left:698.74px;">ARTICOLI</span>
<div style="left:1332px;top:553px;width:13px;height:2px;background:#7ba8c2"></div>
<svg style="left:697.6px;top:575.6px" width="20" height="20" viewBox="0 0 20 20"><circle cx="10" cy="10" r="7.9" fill="#fff" stroke="#1b6088" stroke-width="2"/><circle cx="10" cy="10" r="3.2" fill="#0f5f8c"/></svg>
<span class="t" style="top:575.94px;font-size:12px;color:#0a0a0a;letter-spacing:0.322px;left:727.74px;">Da selezione</span>
<div style="left:825px;top:573px;width:33px;height:25px;box-sizing:border-box;border:1px solid #1d6488;background:linear-gradient(#cbe9fc 0,#e6f4fd 45%,#fff 82%)"></div>
<span class="t" style="top:573.69px;font-size:18.5px;color:#376a8a;left:834.88px;letter-spacing:-1.14px;">...</span>
<span class="t" style="top:604.75px;font-size:14px;color:#0a0a0a;letter-spacing:-0.157px;left:697.53px;">Ordina per</span>
<div style="left:964px;top:602px;width:20px;height:25px;background:#f0f8ff"></div>
<svg style="left:970.6px;top:612.3px" width="8" height="4" viewBox="0 0 8 4"><path d="M0 0 H8 L4 4 Z" fill="#46587a"/></svg>
<span class="t" style="top:604.84px;font-size:12px;color:#0a0a0a;letter-spacing:0.396px;left:827.74px;">Codice articolo</span>
<svg style="left:697.6px;top:634.4px" width="20" height="20" viewBox="0 0 20 20"><circle cx="10" cy="10" r="8.1" fill="#fff" stroke="#c8c8c8" stroke-width="2"/></svg>
<span class="t" style="top:634.74px;font-size:12px;color:#0a0a0a;left:727.74px;">Lista sel. N<span class="deg">°</span></span>
<div style="left:825px;top:632px;width:56px;height:25px;background:#ebebeb"></div>
<svg style="left:865.3px;top:639.25px" width="12" height="12" viewBox="0 0 12 12"><circle cx="7.4" cy="4.3" r="3.1" fill="none" stroke="#aab1c0" stroke-width="1.2"/><path d="M5.2 6.6 L1.1 10.4" stroke="#aab1c0" stroke-width="1.55" stroke-linecap="round"/></svg>
<span class="t" style="top:634.84px;font-size:12px;color:#0a0a0a;right:537.94px;">0</span>
<svg style="left:698.8px;top:694.6px" width="17.6" height="17.6" viewBox="0 0 17.6 17.6"><rect x="0.85" y="0.85" width="15.9" height="15.9" rx="3.2" fill="#fff" stroke="#c9c9c9" stroke-width="1.7"/></svg>
<span class="t" style="top:693.64px;font-size:12px;color:#0a0a0a;letter-spacing:0.441px;left:728.84px;">Non stampare articoli con dati a zero</span>
<svg style="left:698.8px;top:723.6px" width="17.6" height="17.6" viewBox="0 0 17.6 17.6"><rect x="0.85" y="0.85" width="15.9" height="15.9" rx="3.2" fill="#fff" stroke="#c9c9c9" stroke-width="1.7"/></svg>
<span class="t" style="top:722.64px;font-size:12px;color:#0a0a0a;letter-spacing:0.429px;left:728.84px;">Non stampare articoli obsoleti</span>
<svg style="left:698.8px;top:753.6px" width="17.6" height="17.6" viewBox="0 0 17.6 17.6"><rect x="0.85" y="0.85" width="15.9" height="15.9" rx="3.2" fill="#fff" stroke="#c9c9c9" stroke-width="1.7"/></svg>
<span class="t" style="top:752.64px;font-size:12px;color:#0a0a0a;letter-spacing:0.440px;left:728.84px;">Ignora articoli senza listino</span>
<div style="left:4px;top:858px;width:1388px;height:64px;box-sizing:border-box;border:1px solid #163e54;border-top-color:#2c586f;border-radius:0 0 5px 5px"></div>
<svg style="left:12.8px;top:866.8px" width="17.6" height="17.6" viewBox="0 0 17.6 17.6"><rect x="0.85" y="0.85" width="15.9" height="15.9" rx="3.2" fill="#fff" stroke="#c9c9c9" stroke-width="1.7"/></svg>
<span class="t" style="top:865.84px;font-size:12px;color:#0a0a0a;letter-spacing:0.411px;left:42.94px;">Visualizza griglia su finestra esterna</span>
<span class="t" style="top:894.55px;font-size:14px;color:#0a0a0a;letter-spacing:0.233px;left:11.83px;">Pronto.</span>
</body></html>
